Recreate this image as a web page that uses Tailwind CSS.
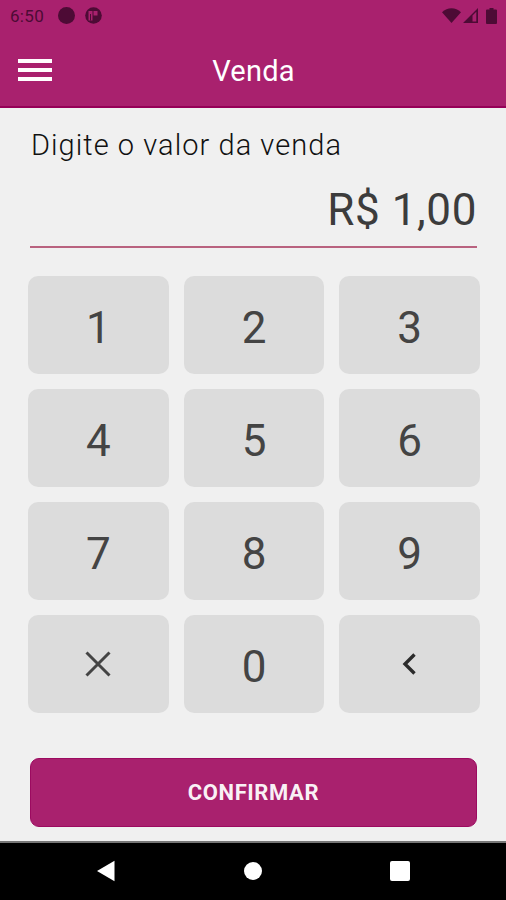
<!DOCTYPE html>
<html lang="pt-BR">

<head>
  <meta charset="UTF-8">
  <meta name="viewport" content="width=device-width, initial-scale=1.0">
  <title>Venda</title>
  <script src="https://cdn.jsdelivr.net/npm/@tailwindcss/browser@4"></script>
</head>

<body class="flex flex-col w-[506px] h-[900px] overflow-hidden bg-[#f0f0f0] font-['Roboto',sans-serif]">

  <!-- Status bar + app bar -->
  <header class="h-[108px] shrink-0 bg-[#a9216e] border-b-2 border-[#960058]">
    <div class="flex items-center h-8 pl-[10px] pr-[9px] text-[#4d0b35]">
      <span class="w-[35px] text-[17px] leading-8 tracking-[0.3px]">6:50</span>
      <svg class="ml-[13px] -mt-[2px] w-[17px] h-[17px]" viewBox="0 0 17 17" fill="currentColor">
        <circle cx="8.5" cy="8.5" r="8.5" />
      </svg>
      <svg class="ml-[10px] -mt-[2px] w-[17px] h-[17px]" viewBox="0 0 17 17">
        <circle cx="8.5" cy="8.5" r="8.3" fill="currentColor" />
        <path d="M3.500 4H7.500V13.500H3.500zM8.500 4h4v4.500h-4z" fill="#a9216e" />
        <path d="M5 7h1v6.500h-1z" fill="currentColor" />
      </svg>
      <svg class="ml-auto -mt-[2px] w-[19px] h-[15px]" viewBox="0 0 19 15" fill="currentColor">
        <path d="M0 4.200C5.400 -1.200 13.600 -1.200 19 4.200L9.500 15z" />
      </svg>
      <svg class="ml-[2px] -mt-[1px] w-[15px] h-[15px]" viewBox="0 0 15 15" fill="currentColor">
        <path fill-rule="evenodd" d="M0 15L15 0V15zM9.500 7.500V13.500H13.300V3.700z" />
      </svg>
      <svg class="ml-[8px] -mt-[1px] w-[11px] h-[16px]" viewBox="0 0 11 16" fill="currentColor">
        <path d="M3.500 0h4v1.600H10a1 1 0 0 1 1 1V15a1 1 0 0 1-1 1H1a1 1 0 0 1-1-1V2.600a1 1 0 0 1 1-1h2.500z" />
      </svg>
    </div>
    <div class="grid grid-cols-3 items-center h-[76px] px-[18px]">
      <button class="flex flex-col gap-[5px] w-[34px] -mt-[2px]">
        <span class="h-1 w-full bg-white"></span>
        <span class="h-1 w-full bg-white"></span>
        <span class="h-1 w-full bg-white"></span>
      </button>
      <h1 class="pt-px pl-px text-center text-[29px] leading-[76px] tracking-[0.2px] text-white">Venda</h1>
    </div>
  </header>

  <main class="flex flex-col grow pl-[30px] pr-[29px]">
    <!-- Sale amount -->
    <label class="mt-[20px] ml-px text-[29px] leading-[34px] tracking-[1.050px] whitespace-nowrap text-[#111] font-light">Digite o valor da venda</label>
    <div class="mt-[7px] h-[79px] border-b-2 border-[#b9627f] text-right text-[44px] leading-[82px] tracking-[0.6px] text-[#3c3c3c]">R$ 1,00</div>

    <!-- Keypad -->
    <div class="grid grid-cols-3 gap-[15px] -ml-[2px] -mr-[3px] mt-[28px] h-[437px] grid-rows-4 text-[44px] text-[#444]">
      <button class="rounded-[10px] bg-[#dcdcdc] pt-1.5">1</button>
      <button class="rounded-[10px] bg-[#dcdcdc] pt-1.5">2</button>
      <button class="rounded-[10px] bg-[#dcdcdc] pt-1.5">3</button>
      <button class="rounded-[10px] bg-[#dcdcdc] pt-1.5">4</button>
      <button class="rounded-[10px] bg-[#dcdcdc] pt-1.5">5</button>
      <button class="rounded-[10px] bg-[#dcdcdc] pt-1.5">6</button>
      <button class="rounded-[10px] bg-[#dcdcdc] pt-1.5">7</button>
      <button class="rounded-[10px] bg-[#dcdcdc] pt-1.5">8</button>
      <button class="rounded-[10px] bg-[#dcdcdc] pt-1.5">9</button>
      <button class="flex items-center justify-center rounded-[10px] bg-[#dcdcdc]">
        <svg class="w-[26px] h-[26px]" viewBox="0 0 26 26" fill="none" stroke="currentColor" stroke-width="3">
          <path d="M1.500 1.500l23 23M24.500 1.500l-23 23" />
        </svg>
      </button>
      <button class="rounded-[10px] bg-[#dcdcdc] pt-1.5">0</button>
      <button class="flex items-center justify-center rounded-[10px] bg-[#dcdcdc]">
        <svg class="-ml-[2px] w-[14px] h-[22px]" viewBox="0 0 14 22" fill="none" stroke="#2c2c2c" stroke-width="3.400">
          <path d="M12.500 1.500L3 11l9.500 9.500" />
        </svg>
      </button>
    </div>

    <button class="mt-[45px] h-[69px] rounded-[9px] border border-[#9c0a60] bg-[#a9216e] text-[22px] font-bold leading-[68px] tracking-[0.6px] text-white/95">CONFIRMAR</button>
  </main>

  <!-- Android navigation -->
  <nav class="flex items-center h-[59px] shrink-0 border-t-2 border-[#777] bg-black pl-[96px] pr-[96px] pb-[2px] justify-between">
    <svg class="w-[19px] h-[22px]" viewBox="0 0 19 22" fill="#fff">
      <path d="M1 11L18.500 0.800V21.200z" />
    </svg>
    <span class="w-[18px] h-[18px] rounded-full bg-white"></span>
    <span class="w-5 h-5 rounded-[2px] bg-white"></span>
  </nav>
</body>

</html>
